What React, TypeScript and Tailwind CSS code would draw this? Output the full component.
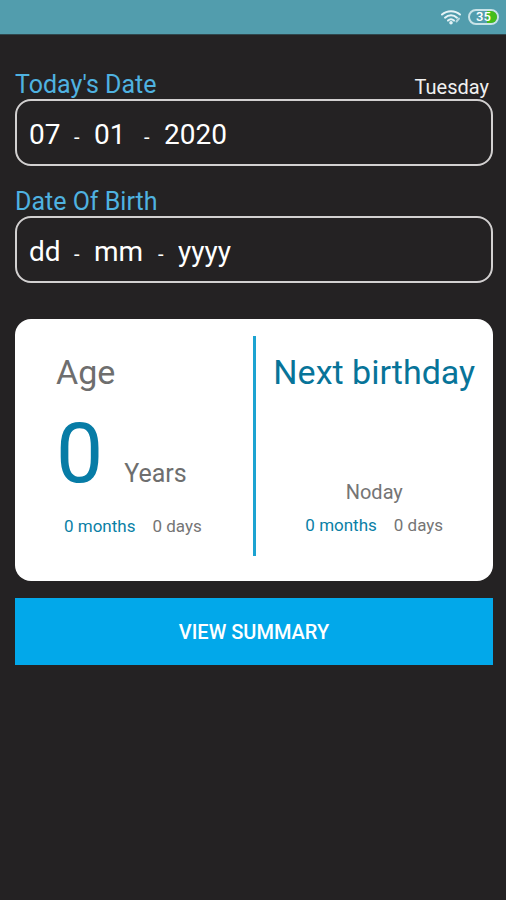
type DateFieldProps = {
  id: string;
  label: string;
  note?: string;
  values?: [string, string, string];
  monthWidth: string;
};

function Dash() {
  return <span className="mt-1 w-[6px] text-[20px] text-white">-</span>;
}

function DateField({ id, label, note, values, monthWidth }: DateFieldProps) {
  const part =
    "bg-transparent p-0 text-[28px] leading-[34px] text-white outline-none placeholder:text-white placeholder:opacity-100";
  return (
    <div>
      <div className="-mb-px flex items-end justify-between pr-1">
        <label htmlFor={id} className="text-[25px] leading-[30px] text-[#4fb2e0]">
          {label}
        </label>
        {note && <span className="text-[20px] leading-[26px] text-[#f0f0f0]">{note}</span>}
      </div>
      <div className="flex h-[67px] items-center gap-[14px] rounded-2xl border-2 border-[#d2d0d0] px-[12px] pt-[5px]">
        <input id={id} aria-label={`${label} day`} placeholder="dd" defaultValue={values?.[0]} className={`w-[31px] ${part}`} />
        <Dash />
        <input aria-label={`${label} month`} placeholder="mm" defaultValue={values?.[1]} className={`${monthWidth} ${part}`} />
        <Dash />
        <input aria-label={`${label} year`} placeholder="yyyy" defaultValue={values?.[2]} className={`w-[80px] ${part}`} />
      </div>
    </div>
  );
}

function Remainder() {
  return (
    <p className="flex gap-[17px] text-[17px] leading-[20px]">
      <span className="text-[#0a7fa6]">0 months</span>
      <span className="text-[#757575]">0 days</span>
    </p>
  );
}

function StatusBar() {
  return (
    <header className="flex h-[35px] items-center justify-end gap-[7px] border-b border-[#2f474d] bg-[#529dad] pr-[7px]">
      <svg width="20" height="16" viewBox="0 0 20 16" fill="none" stroke="#e6f4f7" strokeWidth="2" strokeLinecap="round" role="img" aria-label="Wi-Fi">
        <path d="M1 5.5C6 1 14 1 19 5.5" />
        <path d="M4 8.7C7.5 5.5 12.5 5.5 16 8.7" />
        <path d="M7 11.6C8.8 10 11.2 10 13 11.6" />
        <circle cx="10" cy="13.8" r="0.8" fill="#e6f4f7" />
        <path d="M15.5 12.5L18 9.5" stroke="#b5d8df" />
      </svg>
      <div className="relative flex h-[16px] w-[31px] items-center justify-center overflow-hidden rounded-full border-2 border-[#c9e3e8]">
        <span className="absolute inset-y-0 right-0 w-[10px] bg-[#45bd1b]" />
        <span className="relative text-[13px] leading-[12px] font-medium text-white">35</span>
      </div>
    </header>
  );
}

export default function App() {
  return (
    <div className="min-h-screen bg-[#242223] font-[Roboto,sans-serif]">
      <StatusBar />
      <main className="pt-[35px] pr-[13px] pl-[15px]">
        <div className="flex flex-col gap-[21px]">
          <DateField id="today" label="Today's Date" note="Tuesday" values={["07", "01", "2020"]} monthWidth="w-[36px]" />
          <DateField id="birth" label="Date Of Birth" monthWidth="w-[50px]" />
        </div>

        <section className="mt-9 grid grid-cols-[1fr_3px_1fr] rounded-2xl bg-white pt-[17px] pb-[25px]">
          <div className="flex min-w-0 flex-col pt-4 pl-[41px]">
            <h2 className="text-[34px] leading-[40px] text-[#6e6e6e]">Age</h2>
            <p className="mt-[13px] flex items-baseline gap-[21px]">
              <span className="text-[84px] leading-[98px] text-[#077ca6]">0</span>
              <span className="text-[25px] leading-[30px] text-[#6e6e6e]">Years</span>
            </p>
            <div className="mt-[13px] pl-2">
              <Remainder />
            </div>
          </div>
          <div className="h-[220px] bg-[#1ca3d1]" />
          <div className="flex min-w-0 flex-col items-center pt-4">
            <h2 className="text-[34px] leading-[40px] whitespace-nowrap text-[#077499]">Next birthday</h2>
            <p className="mt-[88px] text-[20px] leading-[24px] text-[#757575]">Noday</p>
            <div className="mt-[11px]">
              <Remainder />
            </div>
          </div>
        </section>

        <button type="button" className="mt-[17px] h-[67px] w-full bg-[#02a8ea] text-[20px] font-medium text-white">
          VIEW SUMMARY
        </button>
      </main>
    </div>
  );
}
